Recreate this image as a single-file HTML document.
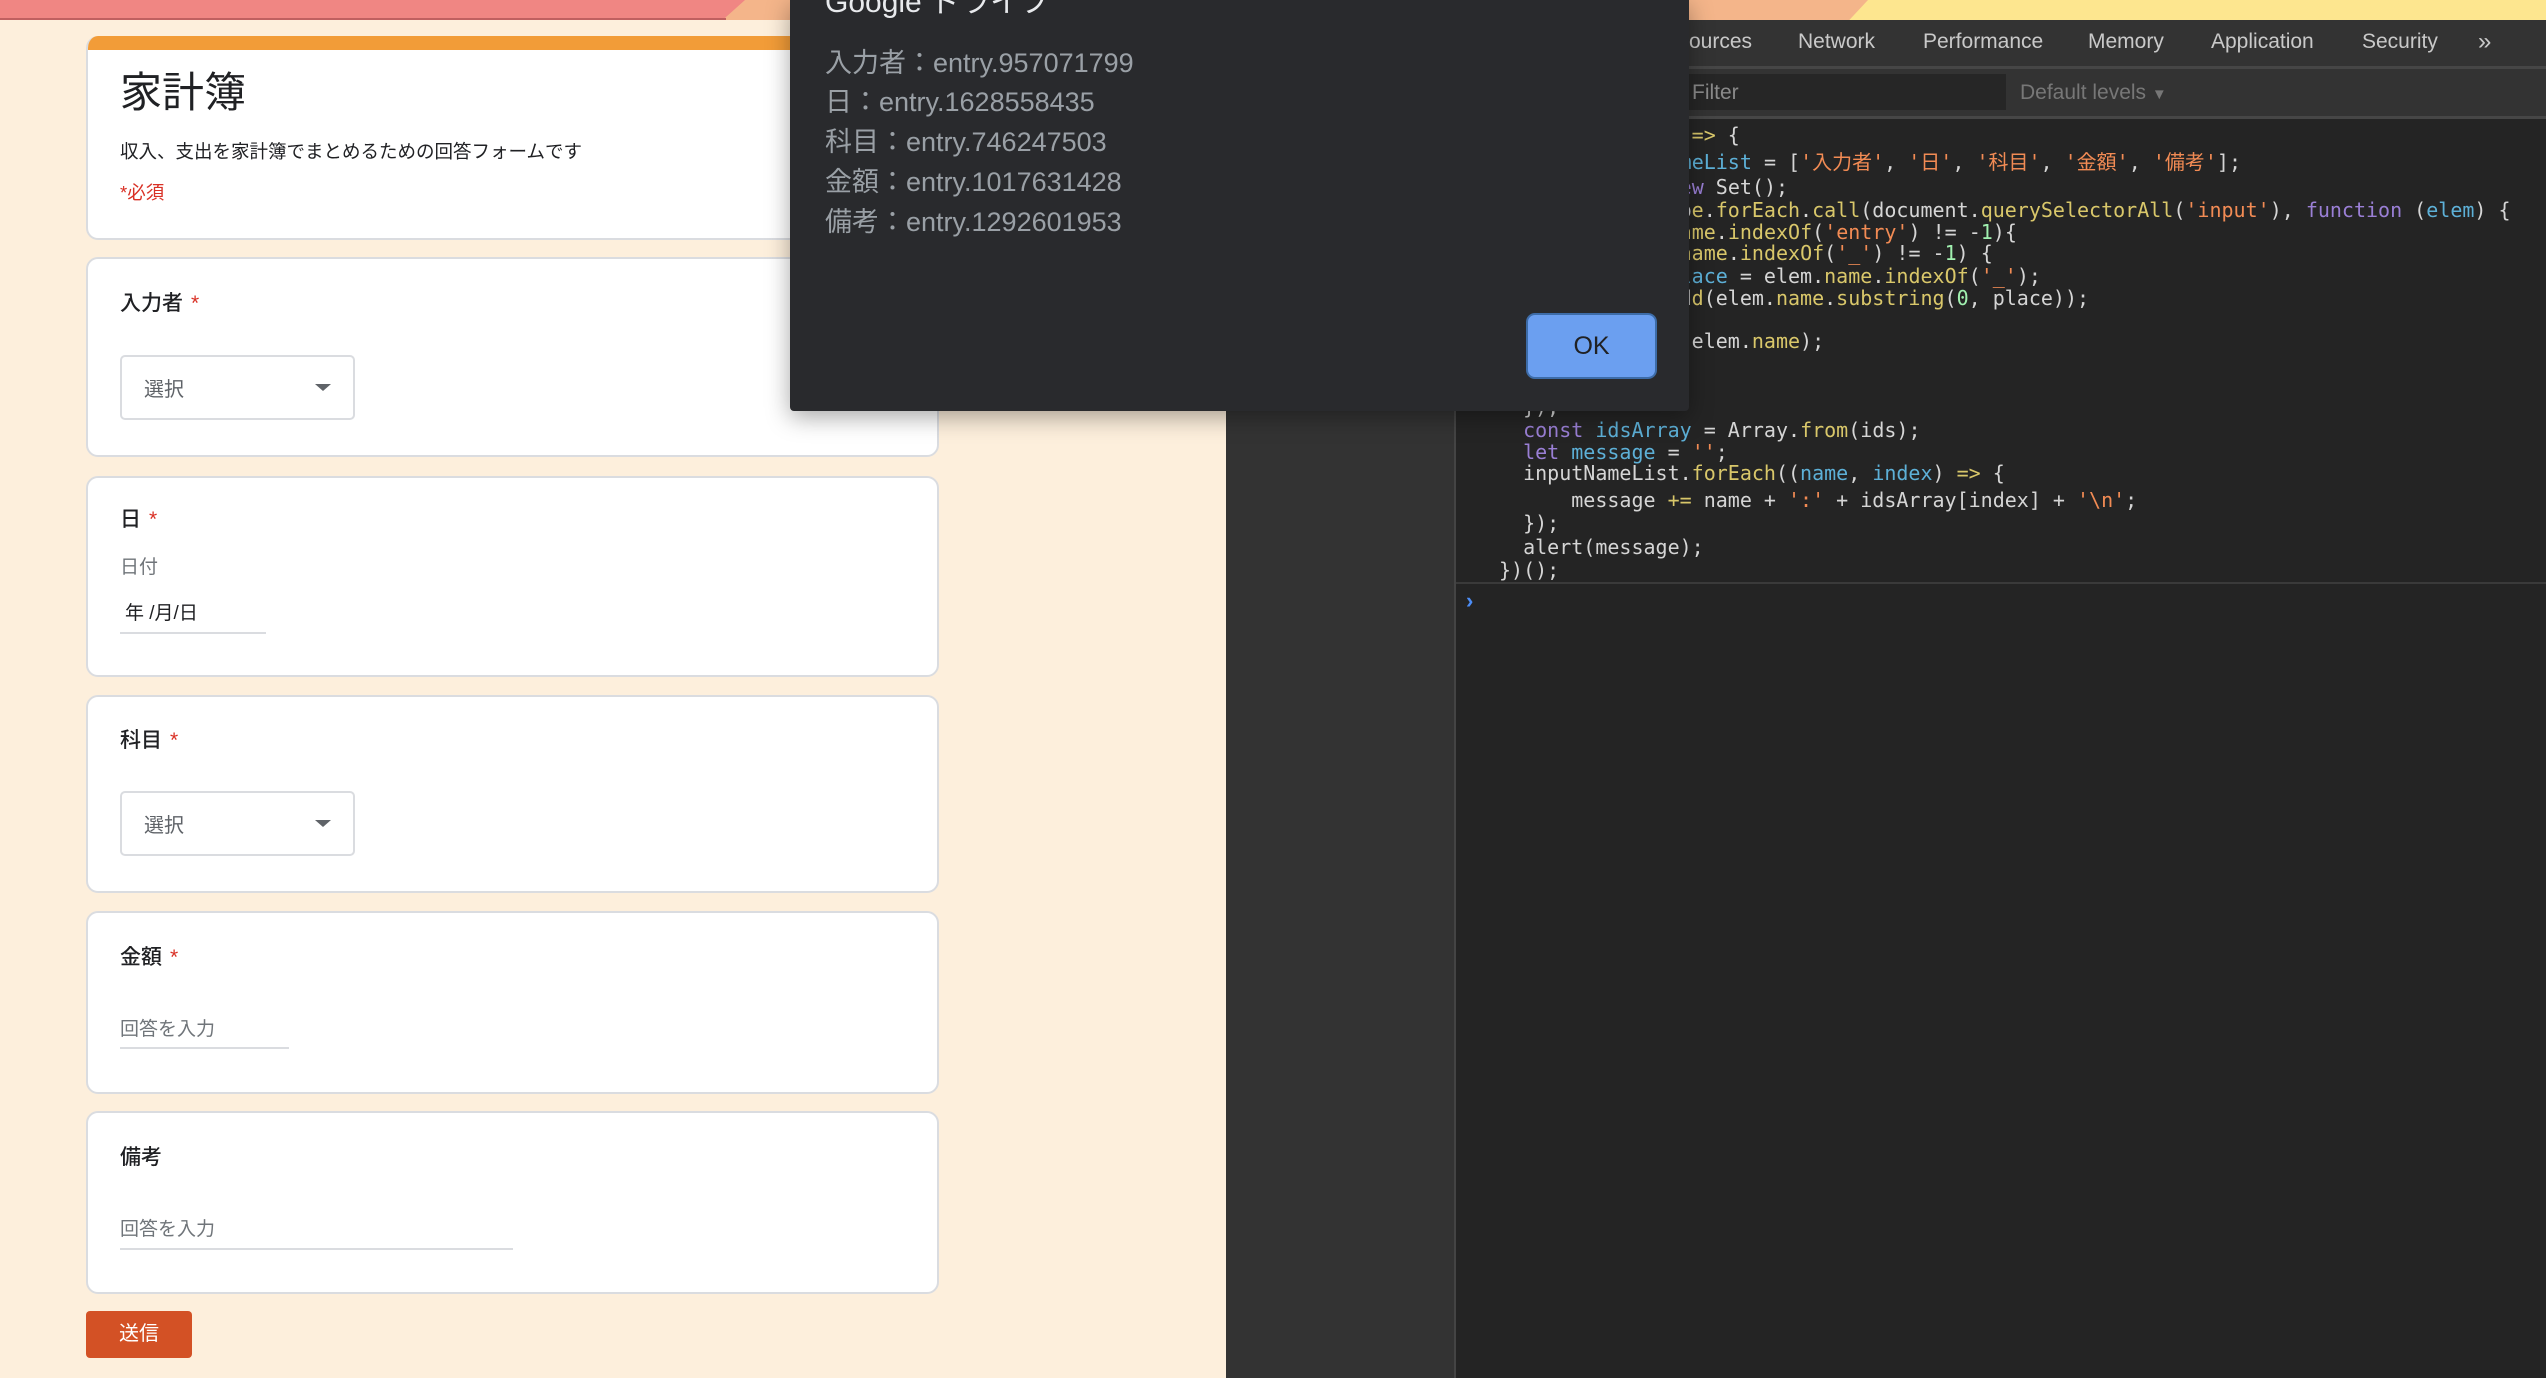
<!DOCTYPE html>
<html><head><meta charset="utf-8"><style>
*{margin:0;padding:0;box-sizing:border-box}
body{width:2546px;height:1378px;overflow:hidden;position:relative;background:#fdefdc;font-family:"Liberation Sans","Noto Sans CJK JP",sans-serif}
.a{position:absolute}
.card{position:absolute;left:86px;width:853px;background:#fff;border:2px solid #dadce0;border-radius:12px}
.lbl{position:absolute;left:120px;font-size:21px;color:#202124;font-weight:500;line-height:30px}
.lbl i{color:#d93025;font-style:normal;margin-left:8px}
.sel{position:absolute;left:120px;width:235px;height:65px;border:2px solid #dadce0;border-radius:5px;background:#fff}
.sel span{position:absolute;left:22px;top:16px;font-size:20px;color:#5f6368}
.sel b{position:absolute;left:193px;top:27px;width:0;height:0;border-left:8px solid transparent;border-right:8px solid transparent;border-top:7px solid #5f6368}
.ph{position:absolute;left:120px;font-size:19px;color:#70757a;line-height:26px}
.ul{position:absolute;left:120px;height:2px;background:#dadce0}
.tab{position:absolute;top:28px;font-size:21px;color:#c9c9c9;line-height:28px}
.code{position:absolute;left:1499px;font-family:"DejaVu Sans Mono","Liberation Mono","Noto Sans CJK JP",monospace;font-size:20px;color:#d5d5d5;white-space:pre;line-height:24px}
.k{color:#9a7fd5}.v{color:#5db0d7}.s{color:#f28b54}.f{color:#d9c76a}.n{color:#a1f1b0}
.dl{position:absolute;left:825px;font-size:27px;color:#9aa0a6;line-height:34px}
</style></head><body>
<div class="a" style="left:0;top:0;width:2546px;height:20px;background:#fde68f"></div>
<div class="a" style="left:0;top:0;width:1868px;height:20px;background:#f4b58a;clip-path:polygon(0 0,100% 0,99% 100%,0 100%)"></div>
<div class="a" style="left:0;top:0;width:745px;height:20px;background:#f08683;clip-path:polygon(0 0,100% 0,97% 100%,0 100%)"></div>
<div class="a" style="left:0;top:18px;width:726px;height:2px;background:#c06060"></div>

<div class="card" style="top:36px;height:204px;border-top:none;overflow:hidden"><div style="height:14px;background:#f29c38"></div></div>
<div class="a" style="left:120px;top:68px;font-size:42px;color:#202124;line-height:50px">家計簿</div>
<div class="a" style="left:120px;top:139px;font-size:18.5px;color:#202124;line-height:26px">収入、支出を家計簿でまとめるための回答フォームです</div>
<div class="a" style="left:120px;top:180px;font-size:18.5px;color:#d93025;line-height:26px">*必須</div>

<div class="card" style="top:257px;height:200px"></div>
<div class="lbl" style="top:289px">入力者<i>*</i></div>
<div class="sel" style="top:355px"><span>選択</span><b></b></div>

<div class="card" style="top:476px;height:201px"></div>
<div class="lbl" style="top:505px">日<i>*</i></div>
<div class="ph" style="top:555px">日付</div>
<div class="a" style="left:125px;top:601px;font-size:19px;color:#202124;line-height:26px">年 /月/日</div>
<div class="ul" style="top:632px;width:146px"></div>

<div class="card" style="top:695px;height:198px"></div>
<div class="lbl" style="top:726px">科目<i>*</i></div>
<div class="sel" style="top:791px"><span>選択</span><b></b></div>

<div class="card" style="top:911px;height:183px"></div>
<div class="lbl" style="top:943px">金額<i>*</i></div>
<div class="ph" style="top:1017px">回答を入力</div>
<div class="ul" style="top:1047px;width:169px"></div>

<div class="card" style="top:1111px;height:183px"></div>
<div class="lbl" style="top:1143px">備考</div>
<div class="ph" style="top:1217px">回答を入力</div>
<div class="ul" style="top:1248px;width:393px"></div>

<div class="a" style="left:86px;top:1311px;width:106px;height:47px;background:#d35125;border-radius:4px;color:#fff;font-size:20px;text-align:center;line-height:47px">送信</div>

<div class="a" style="left:1226px;top:20px;width:228px;height:1358px;background:#333"></div>
<div class="a" style="left:1454px;top:20px;width:1092px;height:1358px;background:#242424;border-left:2px solid #444"></div>
<div class="a" style="left:1454px;top:20px;width:1092px;height:46px;background:#333"></div>
<div class="a" style="left:1454px;top:66px;width:1092px;height:3px;background:#464646"></div>
<div class="a" style="left:1454px;top:69px;width:1092px;height:47px;background:#333"></div>
<div class="a" style="left:1689px;top:74px;width:317px;height:36px;background:#262626"></div>
<div class="a" style="left:1454px;top:116px;width:1092px;height:3px;background:#464646"></div>
<div class="tab" style="left:1675px">Sources</div>
<div class="tab" style="left:1798px">Network</div>
<div class="tab" style="left:1923px">Performance</div>
<div class="tab" style="left:2088px">Memory</div>
<div class="tab" style="left:2211px">Application</div>
<div class="tab" style="left:2362px">Security</div>
<div class="tab" style="left:2478px;font-size:24px">»</div>
<div class="a" style="left:1692px;top:79px;font-size:21px;color:#8a8a8a;line-height:28px">Filter</div>
<div class="a" style="left:2020px;top:79px;font-size:21px;color:#777;line-height:28px">Default levels <span style="font-size:15px">▼</span></div>

<div class="code" style="top:123px">(function       <span class="f">=&gt;</span> {</div>
<div class="code" style="top:150px">  <span class="k">const</span> <span class="v">inputNameList</span> = [<span class="s">'入力者'</span>, <span class="s">'日'</span>, <span class="s">'科目'</span>, <span class="s">'金額'</span>, <span class="s">'備考'</span>];</div>
<div class="code" style="top:175px">  <span class="k">const</span> <span class="v">ids</span> = <span class="k">new</span> Set();</div>
<div class="code" style="top:198px">  Array.prototyp<span class="f">e</span>.<span class="f">forEach</span>.<span class="f">call</span>(document.<span class="f">querySelectorAll</span>(<span class="s">'input'</span>), <span class="k">function</span> (<span class="v">elem</span>) {</div>
<div class="code" style="top:220px">     <span class="k">if</span> (elem.<span class="f">na</span><span class="f">me</span>.<span class="f">indexOf</span>(<span class="s">'entry'</span>) != -<span class="n">1</span>){</div>
<div class="code" style="top:241px">      <span class="k">if</span> (elem.<span class="f">name</span>.<span class="f">indexOf</span>(<span class="s">'_'</span>) != -<span class="n">1</span>) {</div>
<div class="code" style="top:264px">        <span class="k">const</span> <span class="v">place</span> = elem.<span class="f">name</span>.<span class="f">indexOf</span>(<span class="s">'_'</span>);</div>
<div class="code" style="top:286px">          ids.ad<span class="f">d</span>(elem.<span class="f">name</span>.<span class="f">substring</span>(<span class="n">0</span>, place));</div>
<div class="code" style="top:308px">      } <span class="k">else</span> {</div>
<div class="code" style="top:329px">        ids.<span class="f">add</span>(elem.<span class="f">name</span>);</div>
<div class="code" style="top:351px">      }</div>
<div class="code" style="top:373px">    }</div>
<div class="code" style="top:395px">  });</div>
<div class="code" style="top:418px">  <span class="k">const</span> <span class="v">idsArray</span> = Array.<span class="f">from</span>(ids);</div>
<div class="code" style="top:440px">  <span class="k">let</span> <span class="v">message</span> = <span class="s">''</span>;</div>
<div class="code" style="top:461px">  inputNameList.<span class="f">forEach</span>((<span class="v">name</span>, <span class="v">index</span>) <span class="f">=&gt;</span> {</div>
<div class="code" style="top:488px">      message <span class="f">+=</span> name + <span class="s">':'</span> + idsArray[index] + <span class="s">'\n'</span>;</div>
<div class="code" style="top:511px">  });</div>
<div class="code" style="top:535px">  alert(message);</div>
<div class="code" style="top:558px">})();</div>
<div class="a" style="left:1456px;top:582px;width:1090px;height:2px;background:#3a3a3a"></div>
<div class="a" style="left:1466px;top:588px;font-size:22px;color:#4c8df6;font-weight:bold">›</div>

<div class="a" style="left:790px;top:0;width:899px;height:411px;background:#292a2d;border-radius:0 0 4px 4px;box-shadow:0 6px 24px rgba(0,0,0,.35)"></div>
<div class="a" style="left:825px;top:-14px;font-size:30px;color:#e8eaed;line-height:34px">Google ドライブ</div>
<div class="dl" style="top:46px">入力者：entry.957071799</div>
<div class="dl" style="top:85px">日：entry.1628558435</div>
<div class="dl" style="top:125px">科目：entry.746247503</div>
<div class="dl" style="top:165px">金額：entry.1017631428</div>
<div class="dl" style="top:205px">備考：entry.1292601953</div>
<div class="a" style="left:1526px;top:313px;width:131px;height:66px;background:#6b9ff0;border:2px solid #3d6ca8;border-radius:9px;color:#202124;font-size:25px;text-align:center;line-height:62px">OK</div>
</body></html>
